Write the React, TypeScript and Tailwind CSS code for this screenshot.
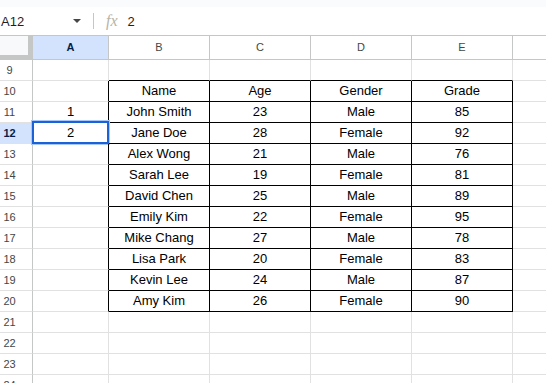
import React from "react";

const COLS = ["A", "B", "C", "D", "E", ""];
const WIDTHS = ["w-[76px]", "w-[101px]", "w-[101px]", "w-[101px]", "w-[101px]", "flex-1"];

const TABLE: Record<number, string[]> = {
  10: ["Name", "Age", "Gender", "Grade"],
  11: ["John Smith", "23", "Male", "85"],
  12: ["Jane Doe", "28", "Female", "92"],
  13: ["Alex Wong", "21", "Male", "76"],
  14: ["Sarah Lee", "19", "Female", "81"],
  15: ["David Chen", "25", "Male", "89"],
  16: ["Emily Kim", "22", "Female", "95"],
  17: ["Mike Chang", "27", "Male", "78"],
  18: ["Lisa Park", "20", "Female", "83"],
  19: ["Kevin Lee", "24", "Male", "87"],
  20: ["Amy Kim", "26", "Female", "90"],
};

const ROWS = Array.from({ length: 16 }, (_, i) => i + 9);

function inTable(r: number, c: number) {
  return r >= 10 && r <= 20 && c >= 1 && c <= 4;
}

function cellText(r: number, c: number) {
  if (c === 0 && r === 11) return "1";
  if (c === 0 && r === 12) return "2";
  if (inTable(r, c)) return TABLE[r][c - 1];
  return "";
}

export default function App() {
  return (
    <div className="w-[546px] h-[383px] overflow-hidden bg-white font-['Liberation_Sans',Arial,sans-serif] text-black">
      {/* top strip */}
      <div className="h-[7px] bg-[#f9fbfd]" />

      {/* formula bar */}
      <div className="h-[28px] flex items-center bg-white">
        <div className="w-[93px] flex items-center justify-between pl-[1px] pr-[12px]">
          <span className="text-[13px] text-[#1f1f1f] leading-none">A12</span>
          <svg width="8" height="4" viewBox="0 0 8 4">
            <path d="M0 0h8L4 4z" fill="#444746" />
          </svg>
        </div>
        <div className="w-px h-[16px] bg-[#c4c7c5]" />
        <span className="ml-[12px] text-[16px] italic font-['Liberation_Serif',serif] text-[#b7b4a8] leading-none">
          fx
        </span>
        <span className="ml-[10px] text-[13px] text-[#1f1f1f] leading-none">2</span>
      </div>

      {/* column headers */}
      <div className="flex h-[25px] border-t border-[#c4c7c5]">
        <div className="w-[33px] h-[24px] bg-[#f8f9fa] border-r-[5px] border-b-[5px] border-[#c4c7c5]" />
        {COLS.map((c, i) => (
          <div
            key={i}
            className={`${WIDTHS[i]} h-[24px] flex items-center justify-center text-[11px] border-b border-[#c4c7c5] ${
              i < 5 ? "border-r" : ""
            } ${i === 0 ? "bg-[#d3e3fd] text-[#041e49] font-bold" : "text-[#444746]"}`}
          >
            {c}
          </div>
        ))}
      </div>

      {/* rows */}
      {ROWS.map((r) => (
        <div key={r} className="flex h-[21px]">
          <div
            className={`w-[33px] h-[21px] border-r border-r-[#c4c7c5] border-b border-b-[#e1e1e1] flex items-center text-[11px] ${
              r === 12 ? "bg-[#d3e3fd] text-[#041e49] font-bold" : "text-[#444746]"
            }`}
          >
            <span className="w-[19px] text-center">{r}</span>
          </div>
          {COLS.map((_, c) => {
            const rightBlack = inTable(r, c) || inTable(r, c + 1);
            const bottomBlack = inTable(r, c) || inTable(r + 1, c);
            return (
              <div
                key={c}
                className={`${WIDTHS[c]} relative h-[21px] flex items-center justify-center text-[13px] border-b ${
                  bottomBlack ? "border-b-black" : "border-b-[#e1e1e1]"
                } ${c < 5 ? (rightBlack ? "border-r border-r-black" : "border-r border-r-[#e1e1e1]") : ""}`}
              >
                {cellText(r, c)}
                {r === 12 && c === 0 && (
                  <div className="absolute -left-px -top-[2px] -right-px -bottom-px border-2 border-[#1a62d6] shadow-[0_0_0_1px_#a8c7fa]" />
                )}
              </div>
            );
          })}
        </div>
      ))}
    </div>
  );
}
